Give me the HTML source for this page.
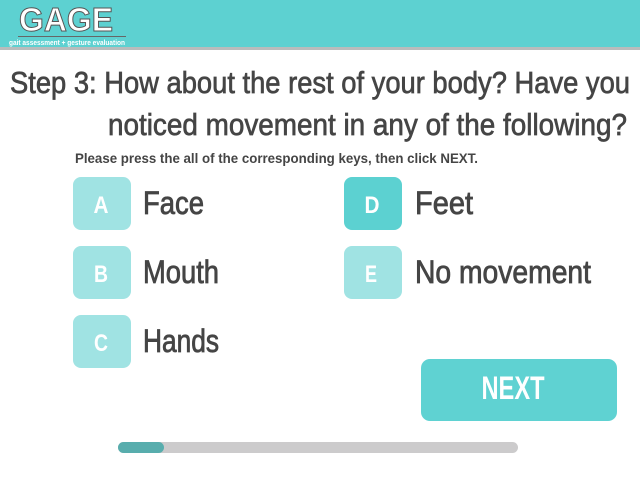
<!DOCTYPE html>
<html><head><style>
body{margin:0;width:640px;height:480px;background:#fff;position:relative;overflow:hidden}
.ab{position:absolute}
.k{position:absolute;width:58px;height:53px;border-radius:8px;background:#a0e3e3}
svg{position:absolute;left:0;top:0}
</style></head><body>
<div class="ab" style="left:0;top:0;width:640px;height:47px;background:#5dd1d1;border-bottom:3px solid #b8bcbc"></div>
<div class="ab" style="left:18px;top:36px;width:108px;height:1px;background:#666"></div>
<div class="k" style="left:73px;top:177px"></div>
<div class="k" style="left:73px;top:246px"></div>
<div class="k" style="left:73px;top:315px"></div>
<div class="k" style="left:344px;top:177px;background:#5cd1d1"></div>
<div class="k" style="left:344px;top:246px"></div>
<div class="ab" style="left:421px;top:359px;width:196px;height:62px;border-radius:9px;background:#5fd2d2"></div>
<div class="ab" style="left:118px;top:442px;width:400px;height:11px;border-radius:6px;background:#cccbcc"></div>
<div class="ab" style="left:118px;top:442px;width:46px;height:11px;border-radius:6px;background:#58adad"></div>
<svg width="640" height="480" font-family="Liberation Sans, sans-serif">
<text x="19" y="31" font-size="33" font-weight="bold" fill="#fff" stroke="#555" stroke-width="1" textLength="94" lengthAdjust="spacingAndGlyphs">GAGE</text>
<text x="9" y="45" font-size="7" font-weight="bold" fill="#fff" textLength="116" lengthAdjust="spacingAndGlyphs">gait assessment + gesture evaluation</text>
<g fill="#454545" stroke="#454545" stroke-width="0.7" font-size="31">
<text x="10" y="93" textLength="620" lengthAdjust="spacingAndGlyphs">Step 3: How about the rest of your body? Have you</text>
<text x="108" y="135" textLength="519" lengthAdjust="spacingAndGlyphs">noticed movement in any of the following?</text>
</g>
<text x="75" y="163" font-size="14" font-weight="bold" fill="#454545" textLength="403" lengthAdjust="spacingAndGlyphs">Please press the all of the corresponding keys, then click NEXT.</text>
<g fill="#454545" stroke="#454545" stroke-width="0.8" font-size="32">
<text x="143" y="214" textLength="61" lengthAdjust="spacingAndGlyphs">Face</text>
<text x="143" y="283" textLength="76" lengthAdjust="spacingAndGlyphs">Mouth</text>
<text x="143" y="352" textLength="76" lengthAdjust="spacingAndGlyphs">Hands</text>
<text x="415" y="214" textLength="58" lengthAdjust="spacingAndGlyphs">Feet</text>
<text x="415" y="283" textLength="176" lengthAdjust="spacingAndGlyphs">No movement</text>
</g>
<g fill="#fff" font-size="24" font-weight="bold" text-anchor="middle">
<text x="101" y="213" textLength="15" lengthAdjust="spacingAndGlyphs">A</text>
<text x="101" y="282" textLength="14" lengthAdjust="spacingAndGlyphs">B</text>
<text x="101" y="351" textLength="14" lengthAdjust="spacingAndGlyphs">C</text>
<text x="372" y="213" textLength="15" lengthAdjust="spacingAndGlyphs">D</text>
<text x="371" y="282" textLength="12" lengthAdjust="spacingAndGlyphs">E</text>
<text x="513" y="399" font-size="32" textLength="63" lengthAdjust="spacingAndGlyphs">NEXT</text>
</g>
</svg>
</body></html>
